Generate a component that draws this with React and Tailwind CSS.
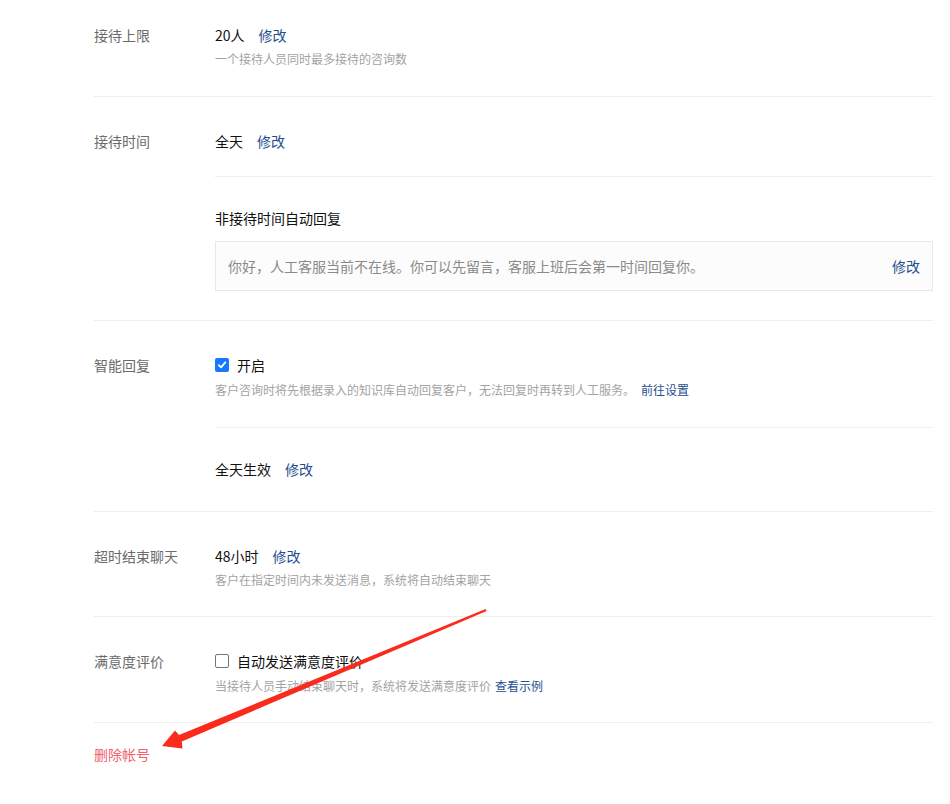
import React from 'react';

const font = { fontFamily: '"Noto Sans CJK SC", "Noto Sans", sans-serif' };

const Link = ({ children, className = '' }) => (
  <a className={`text-[#1f4f8f] cursor-pointer ${className}`}>{children}</a>
);

const Desc = ({ children, className = 'mt-[6px]' }) => (
  <div className={`${className} text-[12px] leading-[16px] text-[#a3a3a3]`}>{children}</div>
);

const Section = ({ label, top = 'pt-[34px]', bottom = 'pb-[29px]', children }) => (
  <div className={`flex border-b border-[#eeeeee] ${top} ${bottom}`}>
    <div className="w-[121px] shrink-0 text-[14px] leading-[20px] text-[#6b6b6b]">{label}</div>
    <div className="flex-1 min-w-0">{children}</div>
  </div>
);

const Value = ({ text, link = '修改' }) => (
  <div className="flex items-center text-[14px] leading-[20px] text-[#111]">
    <span>{text}</span>
    <Link className="ml-[14px]">{link}</Link>
  </div>
);

const Check = ({ checked, label }) => (
  <div className="flex items-center text-[14px] leading-[20px] text-[#111]">
    {checked ? (
      <span className="w-[14px] h-[14px] rounded-[2px] bg-[#1677ff] flex items-center justify-center">
        <svg width="10" height="10" viewBox="0 0 10 10">
          <path d="M1.8 5.2 L4 7.4 L8.3 2.4" stroke="#fff" strokeWidth="1.8" fill="none" strokeLinecap="round" strokeLinejoin="round" />
        </svg>
      </span>
    ) : (
      <span className="w-[14px] h-[14px] rounded-[2px] border border-[#767676] bg-white" />
    )}
    <span className="ml-[8px]">{label}</span>
  </div>
);

export default function App() {
  return (
    <div className="relative w-[950px] h-[804px] bg-white overflow-hidden" style={font}>
      <div className="pl-[94px] pr-[17px]">
        <Section label="接待上限" top="pt-[25px]">
          <Value text="20人" />
          <Desc>一个接待人员同时最多接待的咨询数</Desc>
        </Section>

        <Section label="接待时间">
          <Value text="全天" />
          <div className="mt-[25px] border-t border-[#eeeeee] pt-[31px]">
            <div className="text-[14px] leading-[20px] text-[#111]">非接待时间自动回复</div>
            <div className="mt-[13px] h-[50px] border border-[#e8e8e8] bg-[#fcfcfc] flex items-center justify-between pl-[12px] pr-[12px] text-[14px]">
              <span className="text-[#8a8a8a]">你好，人工客服当前不在线。你可以先留言，客服上班后会第一时间回复你。</span>
              <Link>修改</Link>
            </div>
          </div>
        </Section>

        <Section label="智能回复" bottom="pb-[32px]">
          <Check checked label="开启" />
          <Desc className="mt-[7px]">
            客户咨询时将先根据录入的知识库自动回复客户，无法回复时再转到人工服务。
            <Link className="ml-[6px] text-[#1a3d78]">前往设置</Link>
          </Desc>
          <div className="mt-[29px] border-t border-[#eeeeee] pt-[31px]">
            <Value text="全天生效" />
          </div>
        </Section>

        <Section label="超时结束聊天" bottom="pb-[28px]">
          <Value text="48小时" />
          <Desc>客户在指定时间内未发送消息，系统将自动结束聊天</Desc>
        </Section>

        <Section label="满意度评价" bottom="pb-[28px]">
          <Check label="自动发送满意度评价" />
          <Desc className="mt-[7px]">
            当接待人员手动结束聊天时，系统将发送满意度评价
            <Link className="ml-[4px]">查看示例</Link>
          </Desc>
        </Section>

        <div className="pt-[21px] text-[14px] leading-[20px] text-[#f2606f]">删除帐号</div>
      </div>

      <svg className="absolute inset-0 pointer-events-none" width="950" height="804" viewBox="0 0 950 804">
        <polygon
          points="485.6,609.1 486.6,611 181.8,741.5 182.5,748.5 162,746 175,730.5 179,735.1"
          fill="#fa2a1c"
        />
      </svg>
    </div>
  );
}
